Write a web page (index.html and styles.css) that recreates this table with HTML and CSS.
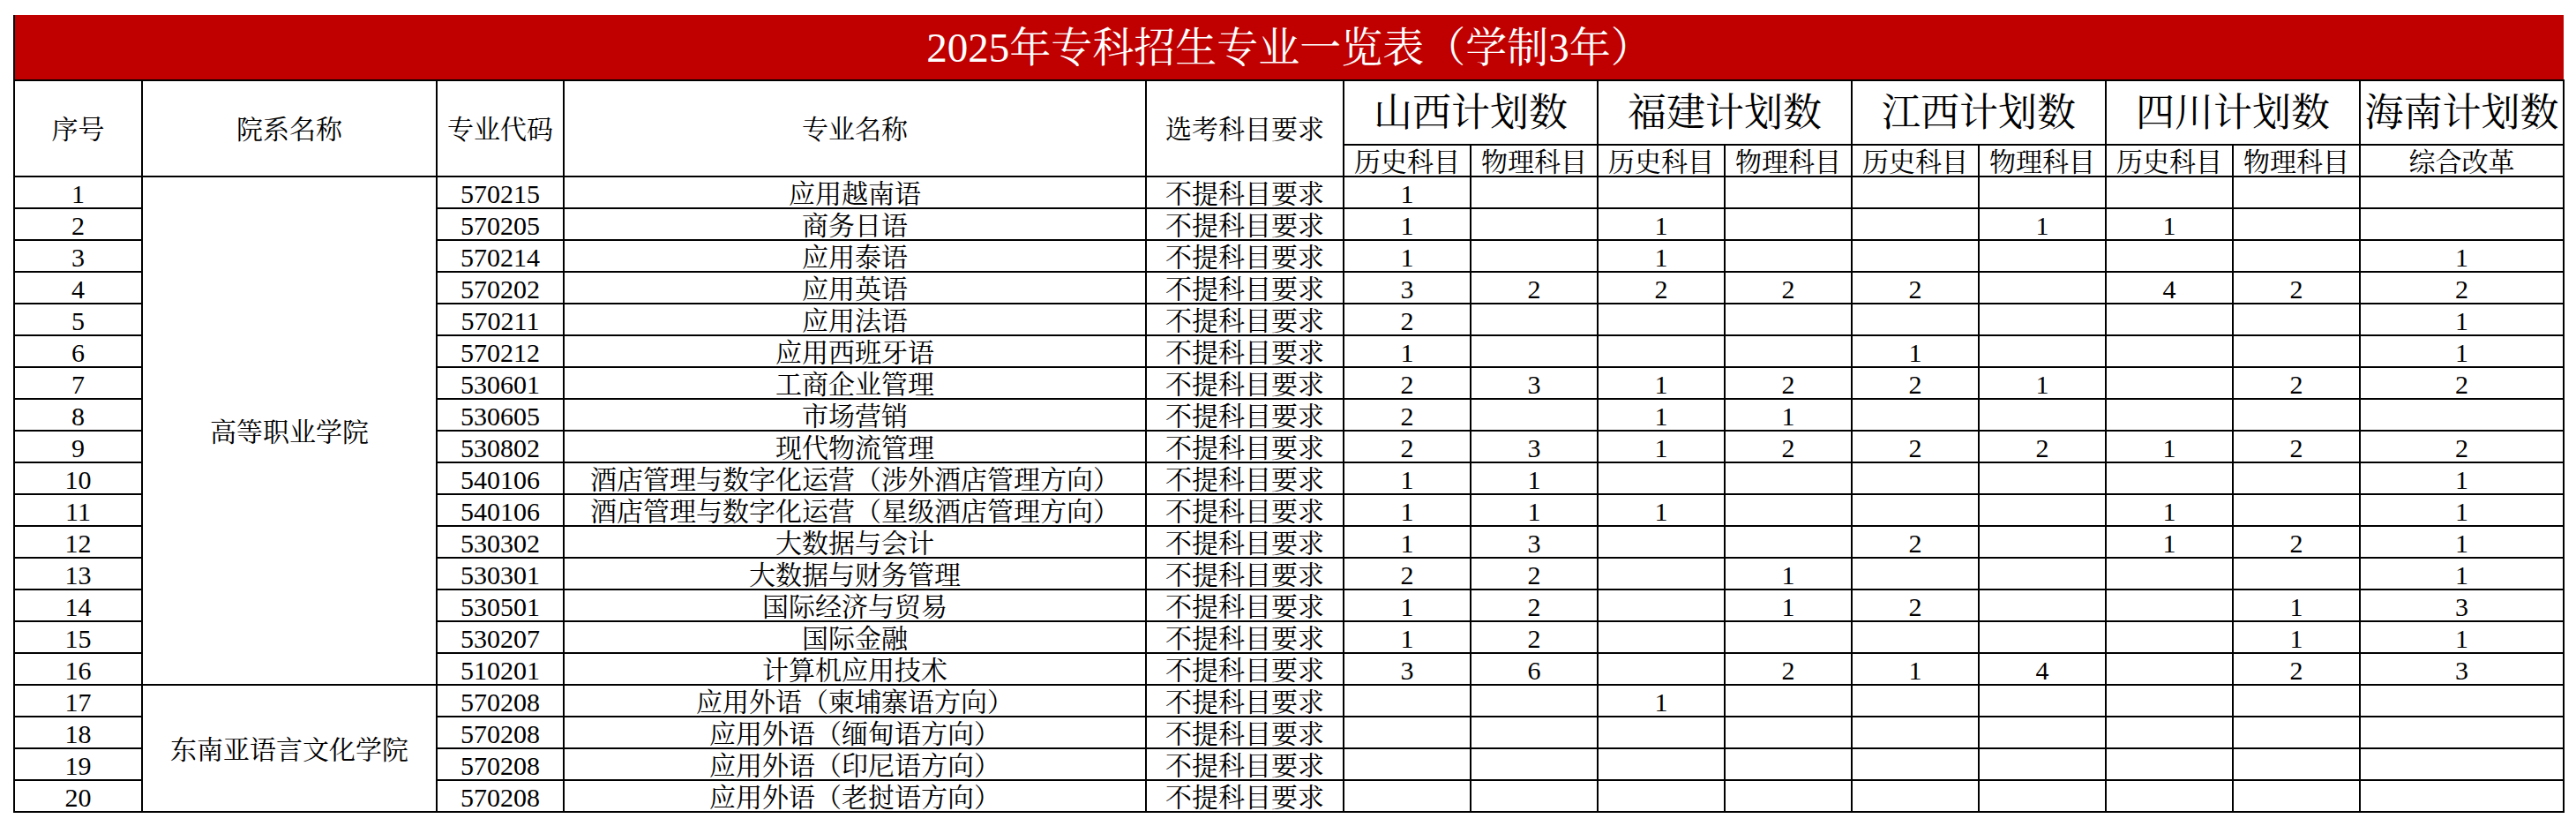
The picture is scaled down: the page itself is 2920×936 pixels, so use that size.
FILE: index.html
```html
<!DOCTYPE html>
<html lang="zh-CN">
<head>
<meta charset="utf-8">
<title>2025年专科招生专业一览表（学制3年）</title>
<link rel="stylesheet" href="styles.css">
</head>
<body>
<div class="page">
<table class="sheet">
<colgroup>
<col class="c-no"><col class="c-dept"><col class="c-code"><col class="c-name"><col class="c-req">
<col class="c-num"><col class="c-num"><col class="c-num"><col class="c-num"><col class="c-num"><col class="c-num"><col class="c-num"><col class="c-num"><col class="c-hn">
</colgroup>
<thead>
<tr class="r-title"><th colspan="14" class="title">2025年专科招生专业一览表（学制3年）</th></tr>
<tr class="r-head">
<th rowspan="2">序号</th><th rowspan="2">院系名称</th><th rowspan="2">专业代码</th><th rowspan="2">专业名称</th><th rowspan="2">选考科目要求</th>
<th colspan="2" class="prov">山西计划数</th><th colspan="2" class="prov">福建计划数</th><th colspan="2" class="prov">江西计划数</th><th colspan="2" class="prov">四川计划数</th><th class="prov">海南计划数</th>
</tr>
<tr class="r-sub">
<th>历史科目</th><th>物理科目</th><th>历史科目</th><th>物理科目</th><th>历史科目</th><th>物理科目</th><th>历史科目</th><th>物理科目</th><th>综合改革</th>
</tr>
</thead>
<tbody>
<tr><td>1</td><td rowspan="16">高等职业学院</td><td>570215</td><td>应用越南语</td><td>不提科目要求</td><td>1</td><td></td><td></td><td></td><td></td><td></td><td></td><td></td><td></td></tr>
<tr><td>2</td><td>570205</td><td>商务日语</td><td>不提科目要求</td><td>1</td><td></td><td>1</td><td></td><td></td><td>1</td><td>1</td><td></td><td></td></tr>
<tr><td>3</td><td>570214</td><td>应用泰语</td><td>不提科目要求</td><td>1</td><td></td><td>1</td><td></td><td></td><td></td><td></td><td></td><td>1</td></tr>
<tr><td>4</td><td>570202</td><td>应用英语</td><td>不提科目要求</td><td>3</td><td>2</td><td>2</td><td>2</td><td>2</td><td></td><td>4</td><td>2</td><td>2</td></tr>
<tr><td>5</td><td>570211</td><td>应用法语</td><td>不提科目要求</td><td>2</td><td></td><td></td><td></td><td></td><td></td><td></td><td></td><td>1</td></tr>
<tr><td>6</td><td>570212</td><td>应用西班牙语</td><td>不提科目要求</td><td>1</td><td></td><td></td><td></td><td>1</td><td></td><td></td><td></td><td>1</td></tr>
<tr><td>7</td><td>530601</td><td>工商企业管理</td><td>不提科目要求</td><td>2</td><td>3</td><td>1</td><td>2</td><td>2</td><td>1</td><td></td><td>2</td><td>2</td></tr>
<tr><td>8</td><td>530605</td><td>市场营销</td><td>不提科目要求</td><td>2</td><td></td><td>1</td><td>1</td><td></td><td></td><td></td><td></td><td></td></tr>
<tr><td>9</td><td>530802</td><td>现代物流管理</td><td>不提科目要求</td><td>2</td><td>3</td><td>1</td><td>2</td><td>2</td><td>2</td><td>1</td><td>2</td><td>2</td></tr>
<tr><td>10</td><td>540106</td><td>酒店管理与数字化运营（涉外酒店管理方向）</td><td>不提科目要求</td><td>1</td><td>1</td><td></td><td></td><td></td><td></td><td></td><td></td><td>1</td></tr>
<tr><td>11</td><td>540106</td><td>酒店管理与数字化运营（星级酒店管理方向）</td><td>不提科目要求</td><td>1</td><td>1</td><td>1</td><td></td><td></td><td></td><td>1</td><td></td><td>1</td></tr>
<tr><td>12</td><td>530302</td><td>大数据与会计</td><td>不提科目要求</td><td>1</td><td>3</td><td></td><td></td><td>2</td><td></td><td>1</td><td>2</td><td>1</td></tr>
<tr><td>13</td><td>530301</td><td>大数据与财务管理</td><td>不提科目要求</td><td>2</td><td>2</td><td></td><td>1</td><td></td><td></td><td></td><td></td><td>1</td></tr>
<tr><td>14</td><td>530501</td><td>国际经济与贸易</td><td>不提科目要求</td><td>1</td><td>2</td><td></td><td>1</td><td>2</td><td></td><td></td><td>1</td><td>3</td></tr>
<tr><td>15</td><td>530207</td><td>国际金融</td><td>不提科目要求</td><td>1</td><td>2</td><td></td><td></td><td></td><td></td><td></td><td>1</td><td>1</td></tr>
<tr><td>16</td><td>510201</td><td>计算机应用技术</td><td>不提科目要求</td><td>3</td><td>6</td><td></td><td>2</td><td>1</td><td>4</td><td></td><td>2</td><td>3</td></tr>
<tr><td>17</td><td rowspan="4">东南亚语言文化学院</td><td>570208</td><td>应用外语（柬埔寨语方向）</td><td>不提科目要求</td><td></td><td></td><td>1</td><td></td><td></td><td></td><td></td><td></td><td></td></tr>
<tr><td>18</td><td>570208</td><td>应用外语（缅甸语方向）</td><td>不提科目要求</td><td></td><td></td><td></td><td></td><td></td><td></td><td></td><td></td><td></td></tr>
<tr><td>19</td><td>570208</td><td>应用外语（印尼语方向）</td><td>不提科目要求</td><td></td><td></td><td></td><td></td><td></td><td></td><td></td><td></td><td></td></tr>
<tr><td>20</td><td>570208</td><td>应用外语（老挝语方向）</td><td>不提科目要求</td><td></td><td></td><td></td><td></td><td></td><td></td><td></td><td></td><td></td></tr>
</tbody>
</table>
</div>
</body>
</html>
```
FILE: styles.css
```css
html, body {
  margin: 0;
  padding: 0;
  background: #ffffff;
}

.page {
  padding: 17px 0 0 15px;
}

.sheet {
  border-collapse: collapse;
  table-layout: fixed;
  width: 2890px;
  font-family: "Liberation Serif", "Noto Serif CJK SC", "Noto Sans CJK SC", serif;
  font-size: 30px;
  color: #000;
}

.c-no { width: 145px; }
.c-dept { width: 334px; }
.c-code { width: 144px; }
.c-name { width: 660px; }
.c-req { width: 224px; }
.c-num { width: 144px; }
.c-hn { width: 231px; }

.sheet th,
.sheet td {
  border: 2px solid #000;
  padding: 3px 0 0;
  text-align: center;
  vertical-align: middle;
  font-weight: normal;
  line-height: 30px;
  white-space: nowrap;
  overflow: hidden;
}

.r-title { height: 74px; }
.r-head { height: 73px; }
.r-sub { height: 36px; }
.sheet tbody tr { height: 36px; }

.sheet th.title {
  background: #c00000;
  color: #ffffff;
  font-size: 47px;
  line-height: 50px;
  padding: 0;
  border-top: none;
  border-right: none;
  border-bottom: none;
}

.sheet th.prov {
  font-size: 44px;
  line-height: 48px;
}
```
